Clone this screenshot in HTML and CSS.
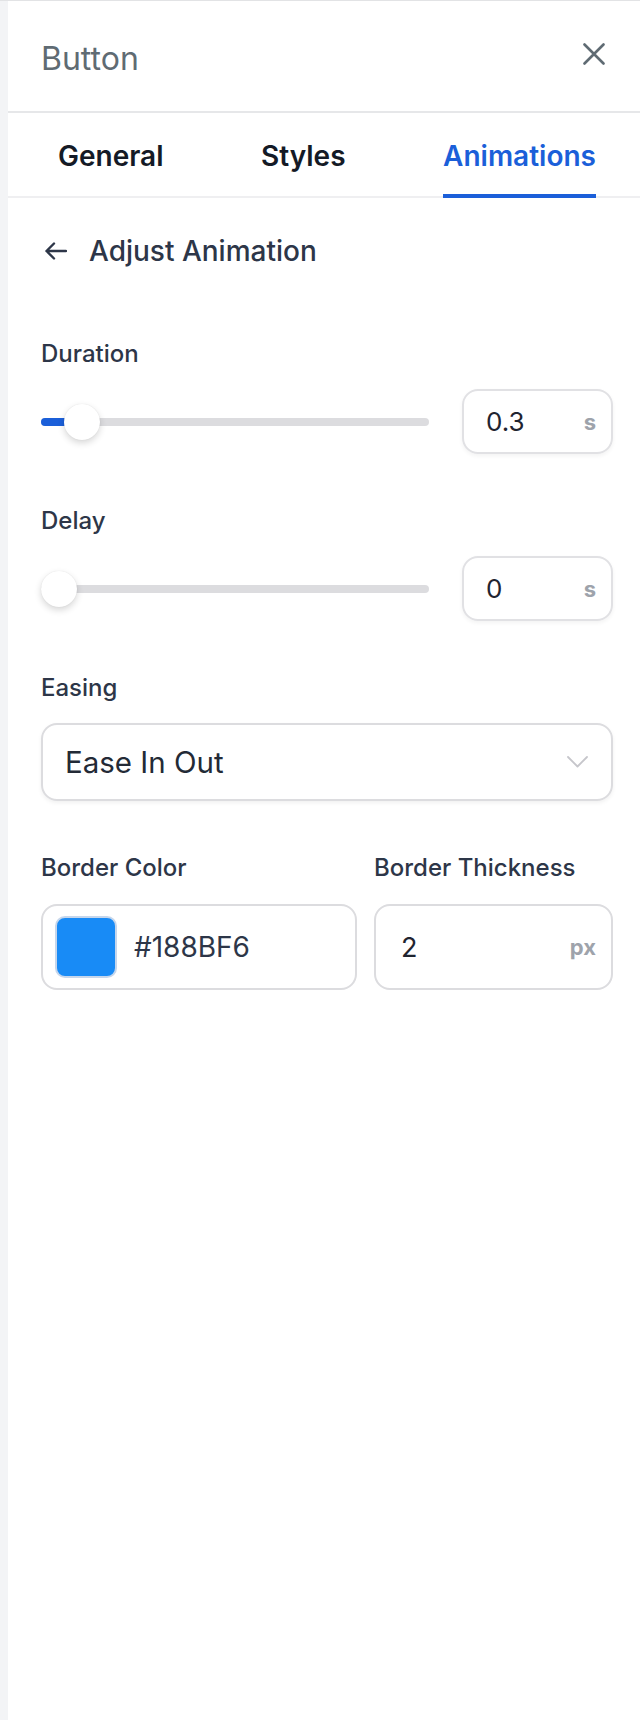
FILE: index.html
```html
<!DOCTYPE html>
<html lang="en">
<head>
<meta charset="utf-8">
<title>Button – Animations</title>
<link rel="stylesheet" href="styles.css">
</head>
<body>
<div class="panel">
  <header class="header">
    <h1 class="title">Button</h1>
    <button class="close" aria-label="Close">
      <svg width="22" height="22" viewBox="0 0 22 22"><path d="M1.5 1.5 L20.5 20.5 M20.5 1.5 L1.5 20.5" stroke="#5f6b73" stroke-width="2.6" stroke-linecap="round" fill="none"/></svg>
    </button>
  </header>
  <nav class="tabs">
    <div class="tab">General</div>
    <div class="tab">Styles</div>
    <div class="tab active">Animations</div>
  </nav>
  <div class="content">
    <div class="back">
      <svg class="back-icon" width="22" height="18" viewBox="0 0 22 18"><path d="M21 9 H1.5 M9 1.5 L1.5 9 L9 16.5" stroke="#2d3648" stroke-width="2.4" stroke-linecap="round" stroke-linejoin="round" fill="none"/></svg>
      <span class="back-text">Adjust Animation</span>
    </div>

    <div class="field first">
      <label class="label">Duration</label>
      <div class="slider-row">
        <div class="slider">
          <div class="track"><div class="fill" style="width:41px"></div></div>
          <div class="thumb" style="left:23px"></div>
        </div>
        <div class="num-input"><span class="val">0.3</span><span class="unit">s</span></div>
      </div>
    </div>

    <div class="field">
      <label class="label">Delay</label>
      <div class="slider-row">
        <div class="slider">
          <div class="track"><div class="fill" style="width:0px"></div></div>
          <div class="thumb" style="left:0px"></div>
        </div>
        <div class="num-input"><span class="val">0</span><span class="unit">s</span></div>
      </div>
    </div>

    <div class="field">
      <label class="label">Easing</label>
      <div class="select">
        <span class="select-text">Ease In Out</span>
        <svg width="21" height="12" viewBox="0 0 21 12"><path d="M1 1 L10.5 10.5 L20 1" stroke="#c6c6cb" stroke-width="1.8" fill="none" stroke-linecap="round" stroke-linejoin="round"/></svg>
      </div>
    </div>

    <div class="field two-col">
      <div class="col">
        <label class="label">Border Color</label>
        <div class="color-input">
          <span class="swatch"></span>
          <span class="color-text">#188BF6</span>
        </div>
      </div>
      <div class="col">
        <label class="label">Border Thickness</label>
        <div class="thick-input">
          <span class="val big">2</span>
          <span class="unit">px</span>
        </div>
      </div>
    </div>
  </div>
</div>
</body>
</html>
```

FILE: styles.css
```css
* { box-sizing: border-box; }

html, body {
  margin: 0;
  padding: 0;
}

body {
  background: #f3f4f6;
  border-top: 1px solid #e2e3e5;
  font-family: Inter, "Liberation Sans", sans-serif;
  color: #2d3648;
  min-height: 1720px;
}

.panel {
  margin-left: 8px;
  background: #ffffff;
  min-height: 1719px;
}

.header {
  height: 112px;
  border-bottom: 2px solid #e6e7e9;
  display: flex;
  align-items: center;
  justify-content: space-between;
  padding: 0 35px 0 33px;
}

.title {
  margin: 4px 0 0 0;
  font-size: 32px;
  font-weight: 400;
  color: #5f6b73;
}

.close {
  border: 0;
  background: none;
  padding: 0;
  margin-bottom: 5px;
  width: 22px;
  height: 22px;
  display: flex;
}

.tabs {
  height: 85px;
  border-bottom: 2px solid #efeff1;
  display: flex;
  justify-content: space-between;
  padding: 0 44px 0 50px;
}

.tab {
  height: 85px;
  margin-bottom: -2px;
  padding-top: 5px;
  border-bottom: 4px solid transparent;
  display: flex;
  align-items: center;
  font-size: 28px;
  font-weight: 600;
  color: #141a26;
}

.tab.active {
  color: #1b5fd9;
  border-bottom-color: #1b5fd9;
}

.content {
  padding: 0 27px 0 33px;
}

.back {
  margin-top: 33px;
  height: 40px;
  display: flex;
  align-items: center;
}

.back-icon {
  margin-left: 4px;
}

.back-text {
  margin-left: 22px;
  font-size: 28px;
  font-weight: 500;
  color: #2d3648;
}

.field {
  margin-top: 51px;
}

.field.first {
  margin-top: 67px;
}

.label {
  display: block;
  font-size: 24px;
  line-height: 32px;
  font-weight: 450;
  color: #2d3648;
  margin-bottom: 19px;
  white-space: nowrap;
}

.slider-row {
  display: flex;
  align-items: center;
  gap: 33px;
}

.slider {
  flex: 1;
  position: relative;
  height: 36px;
  display: flex;
  align-items: center;
}

.track {
  width: 100%;
  height: 8px;
  border-radius: 4px;
  background: #dcdcdf;
  overflow: hidden;
}

.fill {
  height: 100%;
  background: #1b5fd9;
}

.thumb {
  position: absolute;
  top: 0;
  width: 36px;
  height: 36px;
  border-radius: 50%;
  background: #ffffff;
  box-shadow: 0 3px 7px rgba(0, 0, 0, 0.16), 0 0 1px rgba(0, 0, 0, 0.12);
}

.num-input {
  width: 151px;
  height: 65px;
  border: 2px solid #e1e1e4;
  border-radius: 16px;
  box-shadow: 0 2px 4px rgba(0, 0, 0, 0.05);
  display: flex;
  align-items: center;
  justify-content: space-between;
  padding: 0 15px 0 22px;
}

.val {
  font-size: 26px;
  font-weight: 400;
  color: #1f2430;
}

.val.big {
  font-size: 27px;
}

.unit {
  font-size: 22px;
  font-weight: 700;
  color: #9ea3ab;
}

.select {
  height: 78px;
  border: 2px solid #dcdcdf;
  border-radius: 16px;
  box-shadow: 0 2px 4px rgba(0, 0, 0, 0.06);
  display: flex;
  align-items: center;
  justify-content: space-between;
  padding: 0 23px 0 22px;
}

.select-text {
  font-size: 29.5px;
  font-weight: 400;
  color: #232a36;
}

.two-col {
  display: grid;
  grid-template-columns: 316px 1fr;
  gap: 17px;
}

.two-col .label {
  margin-bottom: 20px;
}

.color-input,
.thick-input {
  height: 86px;
  border: 2px solid #dcdcdf;
  border-radius: 16px;
  display: flex;
  align-items: center;
}

.color-input {
  padding: 0 12px;
}

.swatch {
  width: 62px;
  height: 62px;
  border-radius: 10px;
  background: #188bf6;
  border: 2px solid #c5d6ec;
  flex: none;
}

.color-text {
  margin-left: 17px;
  font-size: 28px;
  font-weight: 400;
  color: #2d3648;
}

.thick-input {
  justify-content: space-between;
  padding: 0 15px 0 25px;
}
```
